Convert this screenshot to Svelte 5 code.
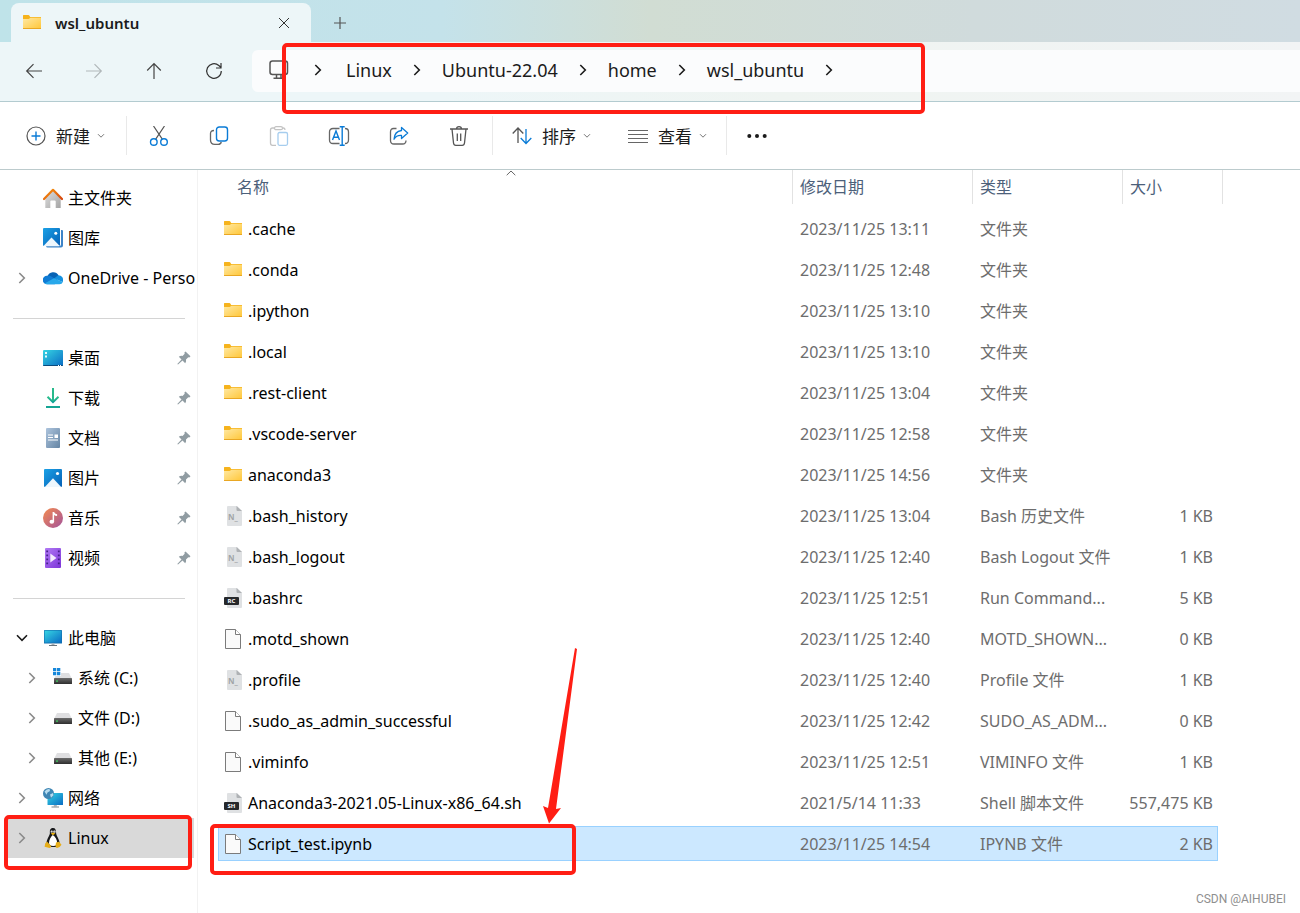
<script>
  const crumbs = ['Linux', 'Ubuntu-22.04', 'home', 'wsl_ubuntu'];

  const places = [
    {label: '主文件夹', icon: 'home'},
    {label: '图库', icon: 'gallery'},
    {label: 'OneDrive - Personal', icon: 'cloud', arrow: 'right'},
    {divider: true},
    {label: '桌面', icon: 'desktop', pinned: true},
    {label: '下载', icon: 'download', pinned: true},
    {label: '文档', icon: 'document', pinned: true},
    {label: '图片', icon: 'picture', pinned: true},
    {label: '音乐', icon: 'music', pinned: true},
    {label: '视频', icon: 'video', pinned: true},
    {divider: true},
    {label: '此电脑', icon: 'pc', arrow: 'down'},
    {label: '系统 (C:)', icon: 'system', arrow: 'right', nested: true},
    {label: '文件 (D:)', icon: 'drive', arrow: 'right', nested: true},
    {label: '其他 (E:)', icon: 'drive', arrow: 'right', nested: true},
    {label: '网络', icon: 'network', arrow: 'right'},
    {label: 'Linux', icon: 'tux', arrow: 'right'}
  ];

  const files = [
    {name: '.cache', date: '2023/11/25 13:11', type: '文件夹', size: '', icon: 'folder'},
    {name: '.conda', date: '2023/11/25 12:48', type: '文件夹', size: '', icon: 'folder'},
    {name: '.ipython', date: '2023/11/25 13:10', type: '文件夹', size: '', icon: 'folder'},
    {name: '.local', date: '2023/11/25 13:10', type: '文件夹', size: '', icon: 'folder'},
    {name: '.rest-client', date: '2023/11/25 13:04', type: '文件夹', size: '', icon: 'folder'},
    {name: '.vscode-server', date: '2023/11/25 12:58', type: '文件夹', size: '', icon: 'folder'},
    {name: 'anaconda3', date: '2023/11/25 14:56', type: '文件夹', size: '', icon: 'folder'},
    {name: '.bash_history', date: '2023/11/25 13:04', type: 'Bash 历史文件', size: '1 KB', icon: 'note'},
    {name: '.bash_logout', date: '2023/11/25 12:40', type: 'Bash Logout 文件', size: '1 KB', icon: 'note'},
    {name: '.bashrc', date: '2023/11/25 12:51', type: 'Run Command...', size: '5 KB', icon: 'RC'},
    {name: '.motd_shown', date: '2023/11/25 12:40', type: 'MOTD_SHOWN...', size: '0 KB', icon: 'blank'},
    {name: '.profile', date: '2023/11/25 12:40', type: 'Profile 文件', size: '1 KB', icon: 'note'},
    {name: '.sudo_as_admin_successful', date: '2023/11/25 12:42', type: 'SUDO_AS_ADM...', size: '0 KB', icon: 'blank'},
    {name: '.viminfo', date: '2023/11/25 12:51', type: 'VIMINFO 文件', size: '1 KB', icon: 'blank'},
    {name: 'Anaconda3-2021.05-Linux-x86_64.sh', date: '2021/5/14 11:33', type: 'Shell 脚本文件', size: '557,475 KB', icon: 'SH'},
    {name: 'Script_test.ipynb', date: '2023/11/25 14:54', type: 'IPYNB 文件', size: '2 KB', icon: 'blank'}
  ];

  let place = $state('Linux');
  let selected = $state('Script_test.ipynb');
</script>

<svelte:head>
  <title>wsl_ubuntu</title>
</svelte:head>

<!-- gradients shared by the icons -->
<svg class="defs" width="0" height="0" aria-hidden="true">
  <defs>
    <linearGradient id="gFolder" x1="0" y1="0" x2="1" y2="1"><stop offset="0" stop-color="#ffe9a4" /><stop offset="1" stop-color="#ffc73a" /></linearGradient>
    <linearGradient id="gBlue" x1="0" y1="0" x2="1" y2="1"><stop offset="0" stop-color="#1ba1e6" /><stop offset="1" stop-color="#0560b6" /></linearGradient>
    <linearGradient id="gScreen" x1="0" y1="0" x2="1" y2="1"><stop offset="0" stop-color="#36d5e3" /><stop offset="1" stop-color="#0a6cc4" /></linearGradient>
    <linearGradient id="gRoof" x1="0" y1="0" x2="1" y2="1"><stop offset="0" stop-color="#f9980f" /><stop offset="1" stop-color="#d6460d" /></linearGradient>
    <linearGradient id="gWall" x1="0" y1="0" x2="1" y2="1"><stop offset="0" stop-color="#dedede" /><stop offset="1" stop-color="#a5a5a5" /></linearGradient>
    <linearGradient id="gDoc" x1="0" y1="0" x2="1" y2="1"><stop offset="0" stop-color="#adc4dd" /><stop offset="1" stop-color="#6484a3" /></linearGradient>
    <linearGradient id="gMusic" x1="0" y1="0" x2="1" y2="1"><stop offset="0" stop-color="#f58b4e" /><stop offset="1" stop-color="#a3539c" /></linearGradient>
    <linearGradient id="gVideo" x1="0" y1="0" x2="1" y2="1"><stop offset="0" stop-color="#b17af4" /><stop offset="1" stop-color="#7d35d9" /></linearGradient>
    <linearGradient id="gDown" x1="0" y1="0" x2="0" y2="1"><stop offset="0" stop-color="#2fc28a" /><stop offset="1" stop-color="#0d9f96" /></linearGradient>
    <linearGradient id="gDrive" x1="0" y1="0" x2="0" y2="1"><stop offset="0" stop-color="#6b6b6b" /><stop offset="1" stop-color="#2e2e2e" /></linearGradient>
  </defs>
</svg>

{#snippet chevron(cls)}
  <svg class={cls} width="12" height="12" viewBox="0 0 12 12" fill="none" stroke="currentColor" stroke-width="1.6" aria-hidden="true"><path d="M3.300 1 8.300 6l-5 5" /></svg>
{/snippet}

{#snippet caret()}
  <svg width="8" height="6" viewBox="0 0 8 6" fill="none" stroke="#777" aria-hidden="true"><path d="M1 1.2 4 4.2 7 1.2" /></svg>
{/snippet}

{#snippet folder()}
  <svg width="20" height="20" viewBox="0 0 20 20" aria-hidden="true">
    <path d="M1 2.500Q1 2 1.600 2h4.900q.5 0 .8.5l.9 1.500H19v3H1z" fill="#f6b31c" />
    <path d="M1 6h5.600l2-1.300H19V15.500H1z" fill="url(#gFolder)" />
    <path d="M1 15.500h18" stroke="#e9a723" />
  </svg>
{/snippet}

{#snippet placeIcon(icon)}
  <svg width="20" height="20" viewBox="0 0 20 20" aria-hidden="true">
    {#if icon === 'home'}
      <path d="M2.300 9.500 10 2.500l7.700 7V20h-5v-6.500q0-1-1-1H8.300q-1 0-1 1V20h-5z" fill="url(#gWall)" />
      <path d="M1 11 10 1.800 19 11" fill="none" stroke="url(#gRoof)" stroke-width="2.200" stroke-linejoin="round" stroke-linecap="round" />
    {:else if icon === 'gallery'}
      <path d="M18 2h1q1 0 1 1v14.500q0 2-2 2H4.500q-1.200 0-1.500-1.300h13q2 0 2-2z" fill="#3d84c8" />
      <rect width="17" height="18" rx="1" fill="url(#gBlue)" />
      <path d="M.5 18 8.500 9.500l8.300 8.500z" fill="#eef7fd" /><circle cx="12.800" cy="5.300" r="1.500" fill="#fff" />
    {:else if icon === 'cloud'}
      <path d="M4.500 8.500a6 6 0 0 1 11-1.200L14 12 7 13z" fill="#0762b4" />
      <path d="M4 16.200A4.200 4.200 0 0 1 4 7.700q2.300-.4 4.300.8l6.500 4-3 3.700z" fill="#0f7bd4" />
      <path d="m11 10.600 4.200-3.300a4.700 4.700 0 0 1 4.500 6.700z" fill="#1490df" />
      <path d="M1.500 15.500 11 10.300l8.800 3.700q-.7 2.200-3.300 2.200H4.500q-1.800 0-3-.7z" fill="#28a8ea" />
    {:else if icon === 'desktop'}
      <rect y="2" width="20" height="16" rx="1" fill="url(#gScreen)" />
      <path d="M0 17h20q0 1-1 1H1q-1 0-1-1z" fill="#0b4b7e" />
      <path d="M2 4h2v2H2zM2 7.500h2v2H2z" fill="#e5fbfd" /><path d="M15 17.500h1m1 0h1" stroke="#fff" />
    {:else if icon === 'download'}
      <path d="M4.500 8.700 10 14.200l5.500-5.500" fill="none" stroke="url(#gDown)" stroke-width="2" />
      <path d="M9 0h2v13H9z" fill="#27b98b" /><path d="M3 18h14v2H3z" fill="#15a594" />
    {:else if icon === 'document'}
      <rect x="3" width="14" height="20" rx="1" fill="url(#gDoc)" />
      <path d="M5 7h5M5 9.500h5M5 12h10" stroke="#fff" stroke-width="1.200" /><path d="M11.500 6.500h3.500v3.500h-3.500z" fill="#fff" />
    {:else if icon === 'picture'}
      <rect x="1" y="1" width="18" height="18" rx="1" fill="url(#gBlue)" />
      <path d="M1.800 19 10 10.300 18.200 19z" fill="#eef7fd" /><circle cx="14.500" cy="5.500" r="1.600" fill="#fff" />
    {:else if icon === 'music'}
      <circle cx="10" cy="10" r="10" fill="url(#gMusic)" />
      <ellipse cx="8.800" cy="13.700" rx="2.300" ry="2" fill="#fff" /><path d="M9.600 14V4h1.500q.5 2 3 2.200v1.900q-2 0-3-1V14z" fill="#fff" />
    {:else if icon === 'video'}
      <rect x="2" width="16" height="20" rx="1" fill="url(#gVideo)" />
      <path d="M4.200 2.500v16M15.800 2.500v16" stroke="#46208a" stroke-width="1.800" stroke-dasharray="1.800 2.200" />
      <path d="M7.300 5.500v9l6.200-4.500z" fill="#f3eafd" />
    {:else if icon === 'pc'}
      <rect x="1" y="2" width="18" height="13.500" rx=".6" fill="#126fae" /><path d="M1.600 2.600h16.800v12H1.600z" fill="url(#gScreen)" />
      <path d="M8.500 15.500h3V17h-3z" fill="#aab3ba" /><path d="M6 17.500h8" stroke="#69747c" />
    {:else if icon === 'system' || icon === 'drive'}
      <path d="M4 5h12l3 6H1z" fill="#dfdfe1" /><rect x="1" y="10" width="18" height="6" rx=".6" fill="url(#gDrive)" />
      <path d="M4 12.300v1.600" stroke="#3bea62" stroke-width="1.200" />
      {#if icon === 'system'}
        <path d="M0 0h8v8H0z" fill="#fff" /><path d="M0 0h3.300v3.300H0zM4 0h3.300v3.300H4zM0 4h3.300v3.300H0zM4 4h3.300v3.300H4z" fill="#1787da" />
      {/if}
    {:else if icon === 'network'}
      <rect x="4.500" y="5" width="15.500" height="12" rx=".6" fill="url(#gScreen)" /><path d="M10.800 17h3v1.500h-3z" fill="#aab3ba" /><path d="M8.500 19h7.500" stroke="#79848c" />
      <circle cx="5.500" cy="5.500" r="5.500" fill="#3f86b4" /><path d="M1.500 3.500q2-3 5-2.500L7 3 4.500 4.500l-1 2.300zM7 6.500 10 5l.5 2.300-2.500 2.500z" fill="#b7dcef" />
    {:else if icon === 'tux'}
      <path d="M10 0C7 0 6.700 2.400 6.900 5c.1 2.200-3.500 6.300-3.400 11L8 19h5l3.700-3c0-4.500-3.600-8.500-3.600-11 0-3-.6-5-3.100-5z" fill="#17181a" />
      <path d="M9.800 7c-2 1.600-3.800 5-3.800 8q0 3 4.200 3t4-3c0-3-1.800-6.400-4.400-8z" fill="#fff" />
      <circle cx="8.700" cy="3.700" r="1.100" fill="#fff" /><circle cx="11.400" cy="3.700" r="1.200" fill="#fff" /><circle cx="9" cy="3.900" r=".5" /><circle cx="11.200" cy="3.900" r=".5" />
      <path d="m7.800 5.500 2.200-1 2.400 1L10 7.200z" fill="#edb411" />
      <path d="m4 13.400 4.300 4.800Q8 20 6.500 20L1.600 18.700l.6-3.300zM16 13.800l2.500 3q-1.500 3-4.500 3.200-1.700-.2-1.500-2.200l.5-3.400z" fill="#e6ad18" />
    {/if}
  </svg>
{/snippet}

{#snippet fileIcon(icon)}
  {#if icon === 'folder'}
    {@render folder()}
  {:else}
    <svg width="20" height="20" viewBox="0 0 20 20" aria-hidden="true">
      {#if icon === 'blank'}
        <path d="M2.500.5h10l5 5v14h-15z" fill="#fafafa" stroke="#7b7b7b" /><path d="M12.500.5v5h5" fill="#fff" stroke="#7b7b7b" />
      {:else}
        <path d="M5 0h9l5 5v14q0 1-1 1H5q-1 0-1-1V1q0-1 1-1z" fill="#dfe1e3" /><path d="M13.500 0v4q0 1 1 1H19z" fill="#aeb1b4" />
        {#if icon === 'note'}
          <text x="5" y="14" class="tag big" fill="#a2a5a8">N_</text>
        {:else}
          <rect x="1" y="9" width="15" height="8" rx="1" fill="#26282b" /><text x="8.500" y="15.200" class="tag" text-anchor="middle" fill="#fff">{icon}</text>
        {/if}
      {/if}
    </svg>
  {/if}
{/snippet}

<div class="window">
  <div class="chrome">
    <div class="tabs">
      <div class="tab">
        {@render folder()}
        <span class="title">wsl_ubuntu</span>
        <button aria-label="关闭标签页">
          <svg width="12" height="12" viewBox="0 0 12 12" stroke="#333" fill="none"><path d="m1 1 10 10M11 1 1 11" /></svg>
        </button>
      </div>
      <button class="add" aria-label="新建标签页">
        <svg width="14" height="14" viewBox="0 0 14 14" stroke="#555" stroke-width="1.200" fill="none"><path d="M7 1v12M1 7h12" /></svg>
      </button>
    </div>

    <div class="nav">
      <button aria-label="后退"><svg width="18" height="18" viewBox="0 0 18 18" fill="none" stroke="#444" stroke-width="1.200"><path d="M17 9H2M8.500 2.200 1.700 9l6.800 6.800" /></svg></button>
      <button aria-label="前进" disabled><svg width="18" height="18" viewBox="0 0 18 18" fill="none" stroke="#b1b8ba" stroke-width="1.200"><path d="M1 9h15M9.500 2.200 16.300 9l-6.800 6.800" /></svg></button>
      <button aria-label="向上"><svg width="18" height="18" viewBox="0 0 18 18" fill="none" stroke="#444" stroke-width="1.200"><path d="M9 17V2M2.200 8.500 9 1.700l6.800 6.800" /></svg></button>
      <button aria-label="刷新"><svg width="18" height="18" viewBox="0 0 18 18" fill="none" stroke="#333" stroke-width="1.200"><path d="M16.300 9A7.300 7.300 0 1 1 13.800 3.500L16 5.500M16 1v5h-5" /></svg></button>
      <div class="address">
        <svg width="20" height="20" viewBox="0 0 20 20" fill="none" stroke="#555" stroke-width="1.500" aria-hidden="true"><rect x="1" y="1" width="17.500" height="13.500" rx="2.500" /><path d="M7.500 15v3M12 15v3M4.500 18.300h10.500" /></svg>
        {@render chevron('first')}
        {#each crumbs as crumb}
          <button class="crumb">{crumb}</button>
          {@render chevron('sep')}
        {/each}
      </div>
    </div>
  </div>

  <div class="toolbar">
    <button class="labelled new">
      <svg width="20" height="20" viewBox="0 0 20 20" fill="none" stroke="#555" stroke-width="1.200"><circle cx="10" cy="10" r="9" /><path d="M10 5.500v9M5.500 10h9" stroke="#0a7bd6" stroke-width="1.400" /></svg>
      <span>新建</span>
      {@render caret()}
    </button>
    <span class="rule"></span>
    <div class="actions">
      <button aria-label="剪切"><svg width="20" height="20" viewBox="0 0 20 20" fill="none" stroke="#555" stroke-width="1.200"><path d="m4.500 0 8.800 13.200M15.500 0 6.700 13.200" /><g stroke="#0a7bd6" stroke-width="1.400"><circle cx="4.800" cy="16" r="3.300" /><circle cx="15" cy="16" r="3.300" /></g></svg></button>
      <button aria-label="复制"><svg width="20" height="20" viewBox="0 0 20 20" fill="none" stroke="#666" stroke-width="1.300"><path d="M5 4.500q-3.500 0-3.500 3V14q0 4.300 4.300 4.300h3.500q2.500 0 3-2.300" /><rect x="7.500" y="1" width="11" height="14" rx="2.700" stroke="#0a7bd6" stroke-width="1.400" /></svg></button>
      <button aria-label="粘贴" disabled><svg width="20" height="20" viewBox="0 0 20 20" fill="none" stroke="#c3c3c3" stroke-width="1.300"><path d="M6 2H3.500Q1.500 2 1.500 4v13q0 2.300 2 2.300H7M14 2h.5Q16 2 16 4" /><rect x="5.500" y=".7" width="8" height="3" rx="1.500" /><rect x="9" y="6.500" width="9.500" height="12.800" rx="1.500" stroke="#a6cdee" /></svg></button>
      <button aria-label="重命名"><svg width="22" height="20" viewBox="0 0 22 20" fill="none" stroke="#666" stroke-width="1.300"><path d="M11.500 2.500H5Q1.500 2.500 1.500 6v8q0 3.500 3.500 3.500h6.500M17 2.500q3.500 0 3.500 3.500v8q0 3.500-3.500 3.500" /><path d="M4.500 14 8 5l3.500 9M5.800 11.300h4.500M14.200.7v18.600M11.700.7h5M11.700 19.300h5" stroke="#0a7bd6" stroke-width="1.400" /></svg></button>
      <button aria-label="共享"><svg width="20" height="20" viewBox="0 0 20 20" fill="none" stroke="#666" stroke-width="1.300"><path d="M7.500 2.500H4.500Q1.500 2.500 1.500 6v8.500q0 3.500 3.500 3.500h8.500q3.500 0 3.500-3.500" /><path d="M12.500 1.500 18.700 7l-6.200 5.500v-3Q7.500 9 5 13.200 5.500 5.500 12.500 4.500z" stroke="#0a7bd6" stroke-linejoin="round" /></svg></button>
      <button aria-label="删除"><svg width="20" height="20" viewBox="0 0 20 20" fill="none" stroke="#555" stroke-width="1.300"><path d="M1 3h18M7.500 3q0-2.300 2.500-2.300T12.500 3M3 3l1.500 14q.3 2.300 2.300 2.300h6.400q2 0 2.300-2.300L17 3M8.300 7.500v7.500M11.700 7.500v7.500" /></svg></button>
    </div>
    <span class="rule"></span>
    <button class="labelled">
      <svg width="20" height="20" viewBox="0 0 20 20" fill="none" stroke="#555" stroke-width="1.300"><path d="M6 17V2M.7 7.500 6 2l5.300 5.500" /><path d="M14 3v14.500M8.700 12l5.300 5.500 5.300-5.500" stroke="#0a7bd6" /></svg>
      <span>排序</span>
      {@render caret()}
    </button>
    <button class="labelled">
      <svg width="20" height="20" viewBox="0 0 20 20" fill="none" stroke="#666" stroke-width="1.200"><path d="M0 4.500h20M0 8.500h20M0 12.500h20M0 16.500h20" /></svg>
      <span>查看</span>
      {@render caret()}
    </button>
    <span class="rule"></span>
    <button class="more" aria-label="查看更多">
      <svg width="20" height="6" viewBox="0 0 20 6" fill="#1b1b1b"><circle cx="2.300" cy="3" r="2" /><circle cx="10" cy="3" r="2" /><circle cx="17.700" cy="3" r="2" /></svg>
    </button>
  </div>

  <div class="body">
    <nav>
      {#each places as item}
        {#if item.divider}
          <div class="divider"></div>
        {:else}
          <button class="place" class:nested={item.nested} class:current={place === item.label} onclick={() => place = item.label}>
            <span class="toggle">{#if item.arrow}{@render chevron(item.arrow)}{/if}</span>
            {@render placeIcon(item.icon)}
            <span class="label">{item.label}</span>
            {#if item.pinned}
              <svg width="14" height="14" viewBox="0 0 14 14" aria-hidden="true"><path d="M8.500.5 13.500 5.300 12.300 6.500l-1-.2L9 8.600q.5 2-.8 3.600L5.500 9.500 1 13.500l-.7-.5L4.500 8.500 1.800 5.800Q3.500 4.500 5.500 5L7.700 2.700 7.400 1.600z" fill="#909ca2" /></svg>
            {/if}
          </button>
        {/if}
      {/each}
    </nav>

    <main>
      <table>
        <thead>
          <tr>
            <th class="name">
              <div>名称</div>
              <svg class="sort" width="10" height="6" viewBox="0 0 10 6" fill="none" stroke="#666"><path d="M.7 5.200 5 1l4.300 4.200" /></svg>
            </th>
            <th class="date"><div>修改日期</div></th>
            <th class="type"><div>类型</div></th>
            <th class="size"><div>大小</div></th>
          </tr>
        </thead>
        <tbody>
          {#each files as file}
            <tr class:selected={selected === file.name} onclick={() => selected = file.name}>
              <td class="name"><div>{@render fileIcon(file.icon)}{file.name}</div></td>
              <td><div>{file.date}</div></td>
              <td><div>{file.type}</div></td>
              <td class="size"><div>{file.size}</div></td>
            </tr>
          {/each}
        </tbody>
      </table>
    </main>
  </div>

  <!-- red markup -->
  <div class="mark path"></div>
  <div class="mark distro"></div>
  <div class="mark script"></div>
  <svg class="arrow" width="40" height="178" viewBox="0 0 40 178" aria-hidden="true"><path d="M36 0 38 1 17 161l5-1-12 15.500L4 158l5 2z" fill="#ff1e14" /></svg>
  <div class="watermark">CSDN @AIHUBEI</div>
</div>

<style>
  :global(body) {
    margin: 0;
    background: #fff;
  }
  .window {
    position: relative;
    display: flex;
    flex-direction: column;
    min-height: 100vh;
    overflow: hidden;
    font: 16px/24px "Noto Sans", "Noto Sans CJK SC", sans-serif;
    color: #000;
  }
  .defs {
    position: absolute;
  }
  button {
    display: flex;
    align-items: center;
    padding: 0;
    border: 0;
    background: none;
    font: inherit;
    color: inherit;
  }
  svg {
    display: block;
    flex: none;
  }
  .tag {
    font: bold 6px "Noto Sans", sans-serif;
  }
  .tag.big {
    font-size: 8px;
  }

  /* title bar */
  .chrome {
    background: linear-gradient(90deg, #bfe3e9, #c4e2ea 34%, #d1ddd3 50%, #d0dbdc 75%, #d0dce2);
    border-bottom: 1px solid #b3cbd0;
  }
  .tabs {
    display: flex;
    height: 42px;
    padding-left: 11px;
    box-sizing: border-box;
    align-items: flex-end;
  }
  .tab {
    display: flex;
    align-items: center;
    box-sizing: border-box;
    width: 300px;
    height: 39px;
    padding: 0 21px 0 11px;
    border-radius: 8px 8px 0 0;
    background: #edf6f8;
  }
  .title {
    flex: 1;
    padding-left: 13px;
    font-size: 15px;
    font-weight: 600;
    color: #1b1b1b;
  }
  .add {
    height: 39px;
    padding: 0 22px;
  }

  .nav {
    display: flex;
    align-items: center;
    box-sizing: border-box;
    height: 59px;
    padding: 0 0 2px 4px;
    background: linear-gradient(90deg, #edf6f8 34%, #eff4f1 60%, #f2f4f5);
  }
  .nav > button {
    width: 60px;
    height: 40px;
    justify-content: center;
  }
  .address {
    display: flex;
    flex: 1;
    align-items: center;
    box-sizing: border-box;
    height: 42px;
    margin-left: 8px;
    padding: 0 0 2px 17px;
    border-radius: 6px 0 0 6px;
    background: #fbfcfd;
    font-size: 18px;
    color: #1b1b1b;
  }
  .first {
    margin: 0 22px 0 23px;
  }
  .sep {
    margin: 0 19px;
  }

  /* command bar */
  .toolbar {
    display: flex;
    align-items: center;
    height: 67px;
    padding-left: 26px;
    border-bottom: 1px solid #bccbcd;
    font-size: 17px;
    color: #1b1b1b;
  }
  .labelled {
    gap: 10px;
    margin-right: 19px;
  }
  .labelled.new {
    margin-right: 21px;
  }
  .labelled span {
    padding-top: 3px;
  }
  .labelled svg:last-child {
    margin-left: -3px;
  }
  .labelled + .labelled {
    margin-left: 18px;
  }
  .rule {
    width: 1px;
    height: 39px;
    background: #e9e9e9;
  }
  .rule + .labelled {
    margin-left: 19px;
  }
  .actions {
    display: flex;
    padding: 0 3px 0 2px;
  }
  .actions button {
    width: 60px;
    height: 40px;
    justify-content: center;
  }
  .more {
    height: 40px;
    padding: 0 20px;
  }

  .body {
    display: flex;
    flex: 1;
  }

  /* navigation pane */
  nav {
    box-sizing: border-box;
    width: 198px;
    padding: 8px 3px 8px 5px;
    border-right: 1px solid #f2f2f2;
  }
  .place {
    width: 100%;
    height: 40px;
    padding: 0 3px 0 11px;
    text-align: left;
  }
  .place.nested {
    padding-left: 21px;
  }
  .place.current {
    background: #d9d9d9;
  }
  .toggle {
    width: 27px;
    color: #8a8a8a;
  }
  .toggle :global(.down) {
    transform: rotate(90deg);
    color: #1b1b1b;
  }
  .label {
    flex: 1;
    padding-left: 5px;
    margin-right: -4px;
    overflow: hidden;
    white-space: nowrap;
  }
  .divider {
    height: 1px;
    margin: 20px 9px 19px 8px;
    background: #d4d4d4;
  }

  /* file list */
  main {
    flex: 1;
    min-width: 0;
    padding: 0 77px 0 20px;
  }
  table {
    width: 100%;
    table-layout: fixed;
    border-collapse: separate;
    border-spacing: 0;
  }
  th {
    position: relative;
    padding: 0 0 4px;
    font-weight: normal;
    text-align: left;
    color: #4c607a;
  }
  th div {
    height: 34px;
    padding-left: 7px;
    border-right: 1px solid #e2e2e2;
    line-height: 34px;
  }
  th.name div {
    padding-left: 19px;
  }
  th.date {
    width: 180px;
  }
  th.type {
    width: 150px;
  }
  th.size {
    width: 100px;
  }
  .sort {
    position: absolute;
    top: 0;
    left: 50%;
  }
  td {
    padding: 3px 0;
    color: #6d6d6d;
  }
  td div {
    display: flex;
    align-items: center;
    box-sizing: border-box;
    height: 35px;
    padding-left: 7px;
    border: solid transparent;
    border-width: 1px 0;
    white-space: nowrap;
  }
  td.name {
    color: #000;
  }
  td.name div {
    gap: 5px;
    padding-left: 4px;
    border-left-width: 1px;
  }
  td.size div {
    justify-content: flex-end;
    margin-right: 5px;
    padding-right: 4px;
    border-right-width: 1px;
  }
  .selected div {
    border-color: #99d1ff;
    background: #cce8ff;
  }

  .mark {
    position: absolute;
    box-sizing: border-box;
    border: 4px solid #ff1e14;
    border-radius: 5px;
    pointer-events: none;
  }
  .path {
    top: 43px;
    left: 282px;
    width: 643px;
    height: 71px;
  }
  .distro {
    top: 815px;
    left: 4px;
    width: 188px;
    height: 55px;
  }
  .script {
    top: 824px;
    left: 210px;
    width: 366px;
    height: 51px;
  }
  .arrow {
    position: absolute;
    top: 648px;
    left: 539px;
    pointer-events: none;
  }
  .watermark {
    position: absolute;
    right: 14px;
    bottom: 5px;
    font: 12px/18px Roboto, sans-serif;
    color: #8f8f8f;
  }
</style>
